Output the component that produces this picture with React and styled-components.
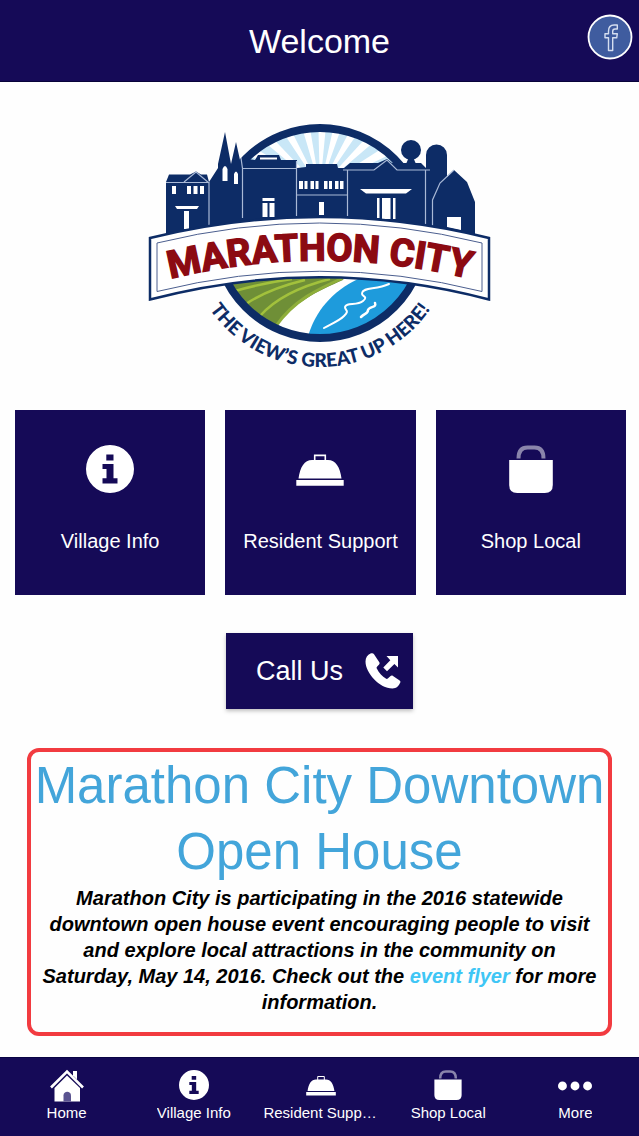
import React from "react";
import styled, { createGlobalStyle } from "styled-components";

const NAVY = "#150a57";
const LOGO_NAVY = "#0d2c66";

const GlobalStyle = createGlobalStyle`
  *, *::before, *::after { box-sizing: border-box; }
  body {
    margin: 0;
    background: #fefefe;
    color: #000;
    font-family: "Liberation Sans", Arial, Helvetica, sans-serif;
  }
  button { font-family: inherit; cursor: pointer; }
`;

const Page = styled.div`
  min-height: 100vh;
  display: flex;
  flex-direction: column;
`;

const Header = styled.header`
  display: grid;
  grid-template-columns: 1fr auto 1fr;
  align-items: center;
  height: 82px;
  padding: 0 6px;
  background: ${NAVY};
  border-bottom: 1px solid #08033a;
`;

const Title = styled.h1`
  grid-column: 2;
  margin: 0;
  font-size: 34px;
  line-height: 40px;
  font-weight: 400;
  color: #fff;
`;

const SocialLink = styled.a`
  justify-self: end;
  display: block;
  height: 46px;
  margin-bottom: 8px;
`;

const Main = styled.main`
  flex: 1;
  display: flex;
  flex-direction: column;
  align-items: center;
`;

const Logo = styled.svg`
  display: block;
  width: 360px;
  height: 264px;
  margin-top: 32px;
`;

const Tiles = styled.section`
  align-self: stretch;
  display: grid;
  grid-template-columns: repeat(3, 1fr);
  gap: 20px;
  padding: 32px 13px 0 15px;
`;

const Tile = styled.button`
  display: flex;
  flex-direction: column;
  align-items: center;
  gap: 36px;
  height: 185px;
  padding: 35px 8px 0;
  border: 0;
  background: ${NAVY};
  color: #fff;
  font-size: 20px;
  line-height: 24px;
  white-space: nowrap;
`;

const CallButton = styled.button`
  display: flex;
  align-items: center;
  gap: 22px;
  height: 76px;
  margin-top: 38px;
  padding: 0 12px 0 30px;
  border: 0;
  background: ${NAVY};
  box-shadow: 0 2px 4px rgba(0, 0, 0, 0.25);
  color: #fff;
  font-size: 27px;
  line-height: 32px;
`;

const News = styled.article`
  align-self: stretch;
  margin: 39px 27px 21px;
  padding: 1px 0 17px;
  border: 4px solid #f23b40;
  border-radius: 12px;
  text-align: center;
`;

const NewsTitle = styled.h2`
  margin: 0;
  color: #43a5da;
  font-size: 51px;
  line-height: 66px;
  font-weight: 400;
`;

const NewsText = styled.p`
  margin: 0;
  padding: 0 6px;
  font-size: 20px;
  line-height: 26px;
  font-weight: 700;
  font-style: italic;

  a {
    color: #3fc6f5;
    text-decoration: none;
  }
`;

const TabBar = styled.nav`
  position: sticky;
  bottom: 0;
  display: grid;
  grid-template-columns: repeat(5, minmax(0, 1fr));
  height: 79px;
  padding-left: 3px;
  background: ${NAVY};
  border-top: 1px solid #0a0444;
`;

const Tab = styled.a`
  display: flex;
  flex-direction: column;
  align-items: center;
  padding: 10px 6px 0;
  color: #fff;
  font-size: 15px;
  line-height: 20px;
  text-decoration: none;
`;

const TabLabel = styled.span`
  max-width: 100%;
  margin-top: 1px;
  overflow: hidden;
  text-overflow: ellipsis;
  white-space: nowrap;
`;

const Glyph = styled.svg`
  display: block;
  flex: none;
  width: ${(p) => p.$size}px;
  height: ${(p) => p.$size}px;
`;

function InfoIcon({ size }) {
  return (
    <Glyph $size={size} viewBox="0 0 48 48" aria-hidden="true">
      <path
        fill="#fff"
        fillRule="evenodd"
        d="M24 0a24 24 0 1 1 0 48a24 24 0 0 1 0-48ZM20.300 9.500v6h7.200v-6ZM16.500 19v5h4v9.200h-4v5.300h15v-5.300h-4V19Z"
      />
    </Glyph>
  );
}

function BellIcon({ size }) {
  return (
    <Glyph $size={size} viewBox="0 0 48 48" aria-hidden="true">
      <path fill="none" stroke="#fff" strokeWidth="1.600" d="M18.700 16v-5.600h10.600V16" />
      <path fill="#fff" d="M2.500 33.500C4 22 8.500 15 16 15h16c7.500 0 12 7 13.500 18.500ZM0.300 35h47.400v5.800H0.300Z" />
    </Glyph>
  );
}

function BagIcon({ size }) {
  return (
    <Glyph $size={size} viewBox="0 0 48 48" aria-hidden="true">
      <path
        fill="none"
        stroke="#fff"
        strokeOpacity="0.5"
        strokeWidth="4"
        d="M11.500 13.500c0-7 3-11 9-11h7c6 0 9 4 9 11"
      />
      <path fill="#fff" d="M2.200 15h43.600v25q0 8-8 8h-27.600q-8 0-8-8Z" />
    </Glyph>
  );
}

function HomeIcon({ size }) {
  return (
    <Glyph $size={size} viewBox="0 0 34 34" aria-hidden="true">
      <path fill="#fff" d="M23 3h4v8.500l-4-4Z" />
      <path fill="none" stroke="#fff" strokeWidth="2.600" d="M1 19.500L17 3.500l16 16" />
      <path fill="#fff" d="M17 7.500L4.500 20V33.500h25.500V20Z" />
      <path fill="#5a5390" d="M13.500 33.500v-6c0-5 7.500-5 7.500 0v6Z" />
    </Glyph>
  );
}

function MoreIcon({ size }) {
  return (
    <Glyph $size={size} viewBox="0 0 36 36" aria-hidden="true">
      <g fill="#fff">
        <circle cx="4.700" cy="19" r="4.700" />
        <circle cx="18" cy="19" r="4.700" />
        <circle cx="31.300" cy="19" r="4.700" />
      </g>
    </Glyph>
  );
}

function CallIcon({ size }) {
  return (
    <Glyph $size={size} viewBox="0 0 36 36" aria-hidden="true">
      <path
        fill="#fff"
        d="M5.500 0.500C2.500 2 0.500 4.500 0.500 8.500C0.500 20 14.500 35.500 27.500 35.500c4 0 6.500-3 7.800-6c.4-1-.1-1.700-1-2.300l-6.300-4.200c-.9-.6-1.900-.5-2.700.2l-2.500 2.300c-.6.500-1.300.6-2 .1C17.500 23.500 14 20 11.800 15.500c-.4-.8-.2-1.500.4-2l1.700-1.700c.8-.8.9-1.600.4-2.600L9 1.200C8.300 0 7 -.1 5.500 .5Z"
      />
      <path fill="#fff" d="M21.500 3H33v11.500l-3.600-3.600l-7.400 7.300l-3.700-3.700l7-7.300Z" />
    </Glyph>
  );
}

function FacebookIcon({ size }) {
  return (
    <Glyph $size={size} viewBox="0 0 46 46" aria-hidden="true">
      <circle cx="23" cy="23" r="21.500" fill="#3f5c9f" stroke="#fff" strokeWidth="1.800" />
      <path
        fill="none"
        stroke="#d5def0"
        strokeWidth="1.400"
        strokeLinejoin="round"
        d="M21.500 36.500V23.800h-3.500v-4h3.500v-2.600c0-4.500 2-6.200 5.600-6.200h3.200v4h-2.300c-1.700 0-2.300.7-2.300 2.200v2.600h4.600l-.6 4h-4v12.700Z"
      />
    </Glyph>
  );
}

const RAYS = [-62, -47, -30, -13, 2, 16, 31, 46, 61];

function TownLogo() {
  const ray = (deg) => {
    const point = (a) => {
      const r = (a * Math.PI) / 180;
      return `${320 + 150 * Math.sin(r)} ${188 - 150 * Math.cos(r)}`;
    };
    return `M320 188L${point(deg - 3.5)}L${point(deg + 3.5)}Z`;
  };
  return (
    <Logo viewBox="140 114 360 264" role="img" aria-label="Marathon City, the view's great up here!">
      <defs>
        <clipPath id="disc">
          <circle cx="320" cy="233" r="102" />
        </clipPath>
        <path id="name-arc" d="M157 282Q320 239 483 282" />
        <path id="motto-arc" d="M186 233A134 134 0 0 0 454 233" />
      </defs>

      <g clipPath="url(#disc)">
        <rect x="215" y="124" width="210" height="100" fill="#c9e7f7" />
        {RAYS.map((deg) => (
          <path key={deg} d={ray(deg)} fill="#fff" />
        ))}
        <rect x="215" y="224" width="210" height="120" fill="#fff" />
        <path d="M215 260H350L343 280C318 291 294 302 276 326L215 326Z" fill="#6f8f37" />
        <g fill="none" stroke="#a2c13c" strokeWidth="2.500">
          <path d="M235 291Q263 283 292 279" />
          <path d="M246 304Q268 289 305 280" />
          <path d="M260 316Q282 291 330 279" />
        </g>
        <path d="M343 278C318 289 294 300 276 326" fill="none" stroke="#8eae3a" strokeWidth="3" />
        <path d="M306 345C311 318 328 293 358 279H430V345Z" fill="#1e9bdc" />
        <g fill="none" stroke="#fff" strokeLinecap="round">
          <path strokeWidth="2" d="M389 284C376 290 363 287 362 293C361 297 369 296 363 301C357 306 346 302 345 307C345 311 350 310 344 316C339 321 331 324 324 328" />
          <path strokeWidth="2.500" d="M375 303C377 308 369 306 368 310C368 314 365 313 361 317" />
        </g>
      </g>
      <circle cx="320" cy="233" r="105" fill="none" stroke={LOGO_NAVY} strokeWidth="8" />

      <g fill={LOGO_NAVY}>
        <path d="M166 240V182L169 174.500H190L196 171.500L201 174.500H207L209 182L218 168V164L225 132L231 164L236 142L240 160L241 158L255 160L258 155H279L281 160H297V168L306 167V164H337L338 168H344L350 163H378L387 159L392 163H403L421 163L426 168V155a10.500 10.500 0 0 1 21 0V177L454 170L467 182L475 202V240Z" />
        <circle cx="411" cy="150" r="10" />
        <path d="M409 157h4l3 7h-10Z" />
      </g>
      <path d="M260 158.500h17" stroke="#fff" strokeWidth="2" />
      <g fill="none" stroke="#a9b9d6" strokeWidth="1.200">
        <path d="M166 182.500H209M184 182L196 172L209 183M209 182V225" />
        <path d="M241 158L242.500 168.500H296.500M242.500 168V218M296.500 161V216M297 195H347" />
        <path d="M343 170H374L387 160L397 170H430M347.500 170V216M425.500 170V224M454 170L440 183L432.500 200V226" />
      </g>
      <g fill="#fff">
        <path d="M172 186h4v8h-4ZM187 186h4v8h-4ZM193.500 186h4v8h-4ZM200 186h4v8h-4Z" />
        <path d="M175 206h24l-2 3h-20ZM184 211h5v18h-5Z" />
        <path d="M222.500 181v-12q2.500-6 5 0v12ZM234 184v-10q2-5 4 0v10Z" />
        <path d="M262.500 198h12v3h-12ZM262.500 203h5v14h-5ZM269.500 203h5v14h-5Z" />
        <path d="M299 181h4v8h-4ZM304.500 181h3v8h-3ZM310.500 181h3.500v8h-3.500ZM315.500 181h3v8h-3ZM324 181h3.500v8h-3.500ZM329 181h3v8h-3ZM335 181h3.500v8h-3.500ZM340 181h3.500v8h-3.500Z" />
        <path d="M319 202h5v13h-5Z" />
        <path d="M360 189h52l-6 4.500h-40ZM377 198h2.500v20H377ZM382 198h8.500v21H382ZM393 198h2.500v21H393ZM447 217h14v13l-14-3Z" />
      </g>

      <path
        d="M150 238Q320 196 489 238V299.500Q320 255 150 299.500Z"
        fill="#fff"
        stroke={LOGO_NAVY}
        strokeWidth="2.500"
      />
      <path
        d="M157 243Q320 203 482 243V291.500Q320 251 157 291.500Z"
        fill="none"
        stroke="#4c5f8f"
        strokeWidth="1"
      />
      <text
        fill="#8c0a12"
        stroke="#8c0a12"
        strokeWidth="1.500"
        fontFamily="Roboto, sans-serif"
        fontWeight="700"
        fontSize="38"
        textAnchor="middle"
      >
        <textPath href="#name-arc" startOffset="50%">
          MARATHON CITY
        </textPath>
      </text>
      <text fill={LOGO_NAVY} fontFamily="Lato, sans-serif" fontWeight="900" fontSize="19" textAnchor="middle">
        <textPath href="#motto-arc" startOffset="50%">
          THE VIEW’S GREAT UP HERE!
        </textPath>
      </text>
    </Logo>
  );
}

const TILES = [
  { label: "Village Info", Icon: InfoIcon },
  { label: "Resident Support", Icon: BellIcon },
  { label: "Shop Local", Icon: BagIcon },
];

const TABS = [
  { label: "Home", Icon: HomeIcon, size: 34 },
  { label: "Village Info", Icon: InfoIcon, size: 30 },
  { label: "Resident Support", Icon: BellIcon, size: 30 },
  { label: "Shop Local", Icon: BagIcon, size: 30 },
  { label: "More", Icon: MoreIcon, size: 34 },
];

const TabIcon = styled.span`
  display: flex;
  align-items: center;
  justify-content: center;
  height: 34px;
`;

export default function App() {
  return (
    <Page>
      <GlobalStyle />
      <Header>
        <Title>Welcome</Title>
        <SocialLink href="#facebook" aria-label="Facebook">
          <FacebookIcon size={46} />
        </SocialLink>
      </Header>
      <Main>
        <TownLogo />
        <Tiles>
          {TILES.map(({ label, Icon }) => (
            <Tile key={label} type="button">
              <Icon size={48} />
              {label}
            </Tile>
          ))}
        </Tiles>
        <CallButton type="button">
          Call Us
          <CallIcon size={36} />
        </CallButton>
        <News>
          <NewsTitle>Marathon City Downtown Open House</NewsTitle>
          <NewsText>
            Marathon City is participating in the 2016 statewide downtown open house event
            encouraging people to visit and explore local attractions in the community on
            Saturday, May 14, 2016. Check out the <a href="#flyer">event flyer</a> for more
            information.
          </NewsText>
        </News>
      </Main>
      <TabBar>
        {TABS.map(({ label, Icon, size }) => (
          <Tab key={label} href="#tab">
            <TabIcon>
              <Icon size={size} />
            </TabIcon>
            <TabLabel>{label}</TabLabel>
          </Tab>
        ))}
      </TabBar>
    </Page>
  );
}
